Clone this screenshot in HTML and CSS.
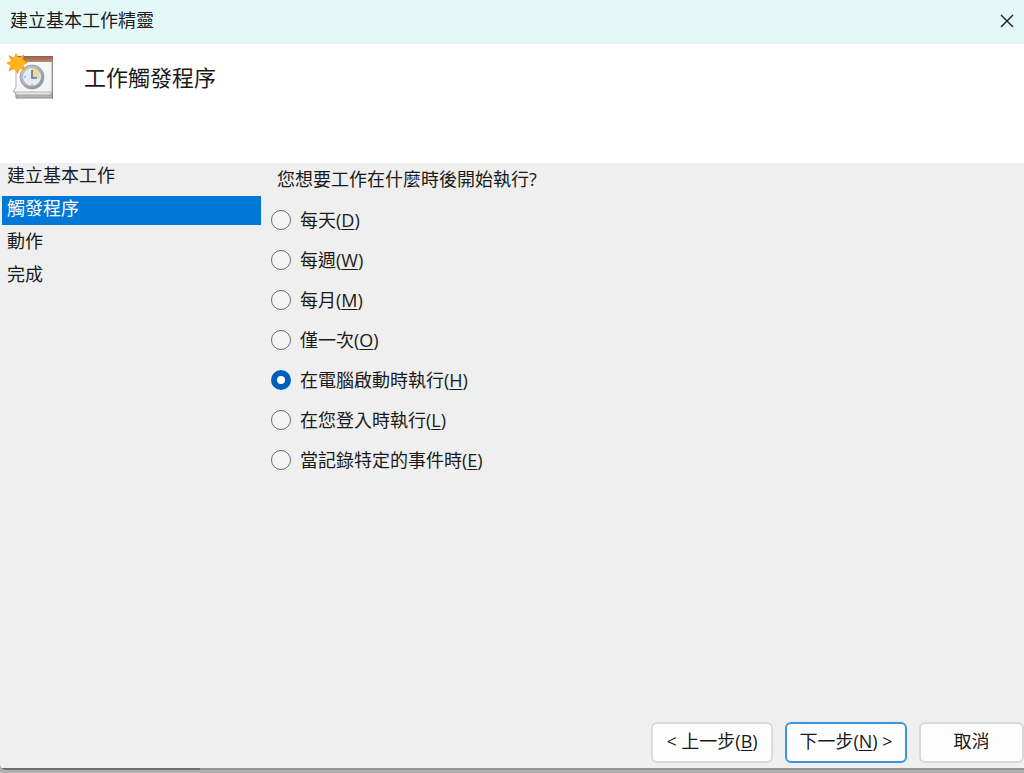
FILE: index.html
```html
<!DOCTYPE html>
<html lang="zh-Hant">
<head>
  <meta charset="UTF-8">
  <title>建立基本工作精靈</title>
  <meta name="viewport" content="width=device-width, initial-scale=1.0">
  <link rel="stylesheet" href="styles.css">
</head>
<body>

<div class="wizard">
  <div class="titlebar">
    <span>建立基本工作精靈</span>
    <button type="button" class="close-btn" aria-label="關閉">
      <svg width="14" height="14" viewBox="0 0 14 14">
        <path d="M1 1L13 13M13 1L1 13" stroke="#1c1c1c" stroke-width="1.4" fill="none"/>
      </svg>
    </button>
  </div>

  <header class="header">
    <svg class="header-icon" width="48" height="48" viewBox="0 0 48 48">
      <defs>
        <linearGradient id="paper" x1="0" y1="0" x2="1" y2="1">
          <stop offset="0" stop-color="#ffffff"/>
          <stop offset="1" stop-color="#f0f0f2"/>
        </linearGradient>
        <linearGradient id="band" x1="0" y1="0" x2="0" y2="1">
          <stop offset="0" stop-color="#8d5f4c"/>
          <stop offset="1" stop-color="#bd8b74"/>
        </linearGradient>
        <linearGradient id="rim" x1="0" y1="0" x2="1" y2="1">
          <stop offset="0" stop-color="#c4c9ce"/>
          <stop offset="1" stop-color="#8e949a"/>
        </linearGradient>
        <radialGradient id="sun">
          <stop offset="0" stop-color="#ffc938"/>
          <stop offset="1" stop-color="#f79a0c"/>
        </radialGradient>
      </defs>
      <!-- calendar pages -->
      <path d="M10 41H46V45H10Z" fill="#b5b5b5" stroke="#8c8c8c"/>
      <path d="M9 38H45V42H10Z" fill="#e6e6e6" stroke="#a3a3a3"/>
      <path d="M10 4H46V39H7L10 34Z" fill="url(#paper)" stroke="#b4b4b4"/>
      <path d="M46.5 8V46" stroke="#8f8b8a"/>
      <path d="M10 3H47V9H10Z" fill="url(#band)"/>
      <!-- clock -->
      <circle cx="26" cy="24" r="10.5" fill="#e4edf6" stroke="url(#rim)" stroke-width="3"/>
      <circle cx="26" cy="24" r="12" fill="none" stroke="#8a9096" stroke-width=".7"/>
      <path d="M26 25V15A9 9 0 0 1 34 25Z" fill="#f1d796"/>
      <path d="M26 17V25H31" fill="none" stroke="#577590" stroke-width="1.6"/>
      <path d="M18 24H20M26 31V33" stroke="#8197aa"/>
      <!-- sun -->
      <path d="M10 0L12.5 4.5L18 1.5L17 7L22 9.5L17.5 12L19.5 17.5L14 16L11.5 21L8.5 16L2.5 18.5L4.5 12.5L0 10L5 8L2.5 2L8 4.5Z" fill="url(#sun)"/>
      <circle cx="11" cy="10.5" r="6.5" fill="#fdb41f"/>
    </svg>
    <h1>工作觸發程序</h1>
  </header>

  <div class="content">
    <nav class="steps">
      <ul>
        <li>建立基本工作</li>
        <li class="active" aria-current="step">觸發程序</li>
        <li>動作</li>
        <li>完成</li>
      </ul>
    </nav>

    <form class="trigger" id="triggerForm">
      <fieldset>
        <legend>您想要工作在什麼時後開始執行?</legend>
        <label><input type="radio" name="trigger" value="daily"><span>每天(<u>D</u>)</span></label>
        <label><input type="radio" name="trigger" value="weekly"><span>每週(<u>W</u>)</span></label>
        <label><input type="radio" name="trigger" value="monthly"><span>每月(<u>M</u>)</span></label>
        <label><input type="radio" name="trigger" value="once"><span>僅一次(<u>O</u>)</span></label>
        <label><input type="radio" name="trigger" value="startup" checked><span>在電腦啟動時執行(<u>H</u>)</span></label>
        <label><input type="radio" name="trigger" value="logon"><span>在您登入時執行(<u>L</u>)</span></label>
        <label><input type="radio" name="trigger" value="event"><span>當記錄特定的事件時(<u>E</u>)</span></label>
      </fieldset>
    </form>
  </div>

  <footer class="footer">
    <button type="button" class="btn">&lt; 上一步(<u>B</u>)</button>
    <button type="submit" form="triggerForm" class="btn btn-default">下一步(<u>N</u>) &gt;</button>
    <button type="button" class="btn btn-cancel">取消</button>
  </footer>
</div>

</body>
</html>
```

FILE: styles.css
```css
* {
  box-sizing: border-box;
  margin: 0;
  padding: 0;
}

body {
  background: #b0b0b0;
  color: #1a1a1a;
  font-family: "Open Sans", "Noto Sans CJK TC", sans-serif;
  font-size: 18px;
  line-height: 24px;
  min-height: 100vh;
  display: flex;
  flex-direction: column;
  padding-bottom: 3px;
}

.wizard {
  flex: 1;
  display: flex;
  flex-direction: column;
  background: linear-gradient(to right, #6f6f72 200px, #949494 200px) bottom / 100% 2px no-repeat #efefef;
  padding-bottom: 2px;
  border-bottom-left-radius: 6px;
}

.titlebar {
  display: flex;
  align-items: center;
  justify-content: space-between;
  height: 44px;
  padding: 0 2px 4px 10px;
  background: #e3f8f7;
  border-top-left-radius: 4px;
}

.close-btn {
  display: flex;
  align-items: center;
  justify-content: center;
  width: 30px;
  height: 32px;
  padding-top: 2px;
  background: none;
  border: none;
}

.header {
  display: flex;
  align-items: flex-start;
  gap: 30px;
  height: 119px;
  padding: 9px 6px;
  background: #fff;
}

.header h1 {
  font-size: 22px;
  font-weight: normal;
  line-height: 48px;
}

.content {
  flex: 1;
  display: flex;
  gap: 10px;
}

.steps {
  width: 261px;
  padding-left: 2px;
}

.steps ul {
  list-style: none;
  display: grid;
  gap: 4px;
}

.steps li {
  padding: 0 5px 5px;
}

.steps .active {
  background: #0078d7;
  color: #fff;
}

.trigger {
  flex: 1;
  padding-top: 4px;
}

.trigger fieldset {
  border: none;
}

.trigger legend {
  padding: 0 6px 9px;
}

.trigger label {
  display: flex;
  align-items: center;
  gap: 9px;
  height: 40px;
}

.trigger input {
  appearance: none;
  width: 20px;
  height: 20px;
  border: 1px solid #6a6a6a;
  border-radius: 50%;
  background: #f5f5f5;
}

.trigger input:checked {
  border: 6px solid #005fb8;
  background: #fff;
}

u {
  text-underline-offset: 2px;
}

.footer {
  display: flex;
  justify-content: flex-end;
  gap: 12px;
  padding-bottom: 5px;
}

.btn {
  width: 122px;
  height: 41px;
  padding-bottom: 3px;
  background: #fdfdfd;
  border: 2px solid #d9d9d9;
  border-radius: 6px;
  color: inherit;
  font: inherit;
  white-space: nowrap;
}

.btn-default {
  border-color: #3c94dc;
}

.btn-cancel {
  width: 105px;
}
```
